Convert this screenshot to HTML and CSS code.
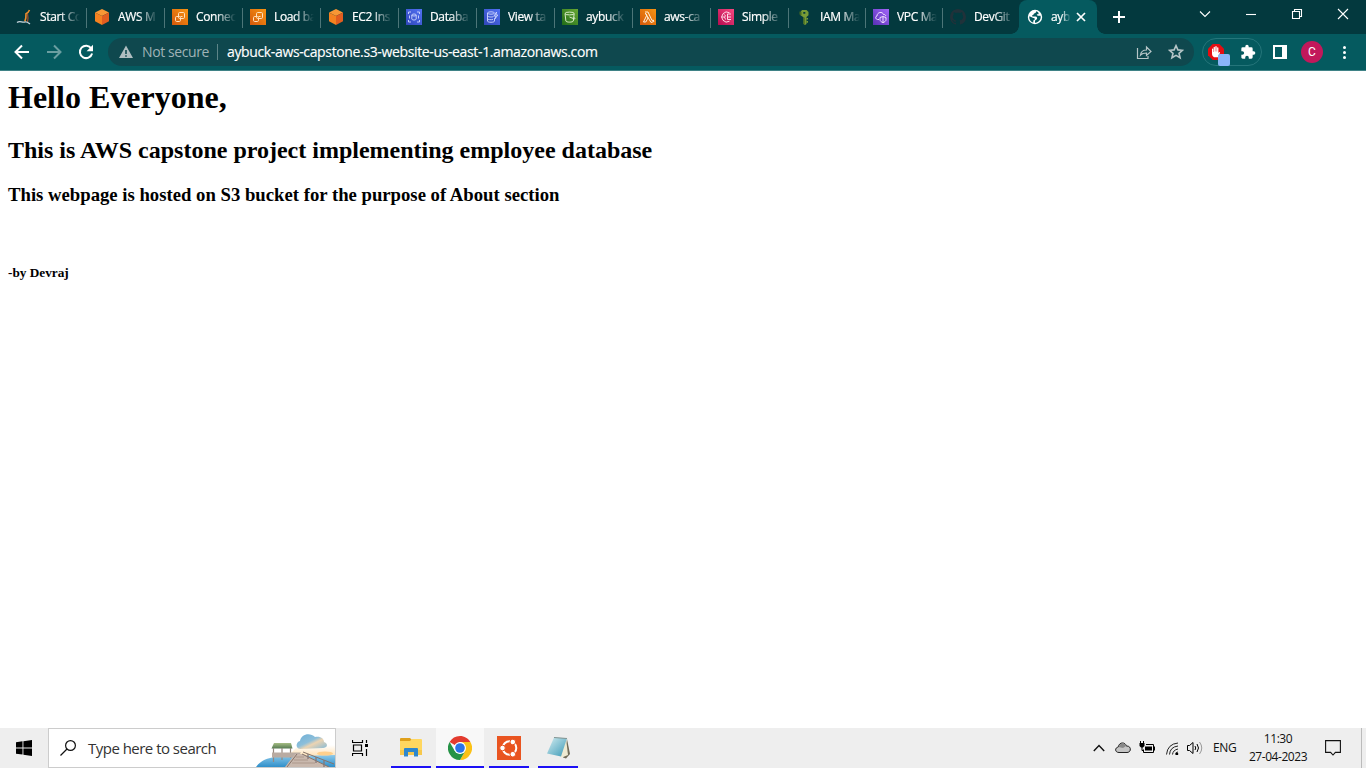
FILE: index.html
```html
<!DOCTYPE html>
<html lang="en">
<head>
<meta charset="utf-8">
<title>aybuck</title>
<link rel="stylesheet" href="styles.css">
</head>
<body>
<svg class="defs" width="0" height="0" aria-hidden="true">
  <defs>
    <linearGradient id="orange" x1="0" y1="1" x2="1" y2="0"><stop offset="0" stop-color="#d4580b"/><stop offset="1" stop-color="#f79412"/></linearGradient>
    <linearGradient id="blue" x1="0" y1="1" x2="1" y2="0"><stop offset="0" stop-color="#3046b8"/><stop offset="1" stop-color="#5272f5"/></linearGradient>
    <linearGradient id="green" x1="0" y1="1" x2="1" y2="0"><stop offset="0" stop-color="#206b18"/><stop offset="1" stop-color="#68a834"/></linearGradient>
    <linearGradient id="pink" x1="0" y1="1" x2="1" y2="0"><stop offset="0" stop-color="#b50b50"/><stop offset="1" stop-color="#f64880"/></linearGradient>
    <linearGradient id="purple" x1="0" y1="1" x2="1" y2="0"><stop offset="0" stop-color="#5730b5"/><stop offset="1" stop-color="#a366fa"/></linearGradient>
    <linearGradient id="water" x1="0" y1="0" x2="0" y2="1"><stop offset="0" stop-color="#8cc9ea"/><stop offset="1" stop-color="#2f8fca"/></linearGradient>
    <linearGradient id="sky" x1="0" y1="0" x2="0" y2="1"><stop offset="0" stop-color="#ffffff"/><stop offset="1" stop-color="#ffe0b0"/></linearGradient>
    <linearGradient id="cloud" x1="0" y1="0" x2="1" y2="1"><stop offset="0" stop-color="#6daed6"/><stop offset=".45" stop-color="#8dbfda"/><stop offset=".6" stop-color="#ecd4b2"/><stop offset="1" stop-color="#80b9d9"/></linearGradient>
    <linearGradient id="roof" x1="0" y1="0" x2="0" y2="1"><stop offset="0" stop-color="#a5bd84"/><stop offset="1" stop-color="#567a52"/></linearGradient>
    <linearGradient id="note" x1="0" y1="0" x2="1" y2="1"><stop offset="0" stop-color="#d5eef1"/><stop offset="1" stop-color="#3998b6"/></linearGradient>
    <symbol id="cube" viewBox="0 0 16 16"><path fill="#f89735" d="M8 0l7 3.500-7 3.600-7-3.600z"/><path fill="#f58220" d="M1 3.500l7 3.600V16l-7-3.800z"/><path fill="#e25d20" d="M15 3.500L8 7.100V16l7-3.800z"/></symbol>
    <symbol id="ec2" viewBox="0 0 16 16"><path fill="url(#orange)" d="M0 0h16v16H0z"/><g fill="none" stroke="#ffe0bc"><rect x="6.500" y="3.500" width="6" height="6" rx="1.200"/><rect x="3.500" y="7.500" width="5" height="5" rx="1.200"/><path d="M8.500 7.500h2"/></g></symbol>
  </defs>
</svg>

<div class="tabstrip">
  <div class="tab first"><svg class="fav" viewBox="0 0 16 16"><path d="M13.500 1c-1 2.500-2 3-3.500 3.800L9.800 9l-1 3.500" fill="none" stroke="#ee8c2c" stroke-width="1.600"/><path d="M11.500 5l.5 4-.5 4" fill="none" stroke="#9b4b2d" stroke-width="1.300"/><path d="M1 13.500c3-2.500 5 .5 8-.5 2-.6 3 .5 5 2" fill="none" stroke="#c8d5de" stroke-width="1.300"/></svg><span class="title">Start Co</span></div>
  <div class="tab"><svg class="fav"><use href="#cube"/></svg><span class="title">AWS M</span></div>
  <div class="tab"><svg class="fav"><use href="#ec2"/></svg><span class="title">Connec</span></div>
  <div class="tab"><svg class="fav"><use href="#ec2"/></svg><span class="title">Load ba</span></div>
  <div class="tab"><svg class="fav"><use href="#cube"/></svg><span class="title">EC2 Ins</span></div>
  <div class="tab"><svg class="fav" viewBox="0 0 16 16"><path fill="url(#blue)" d="M0 0h16v16H0z"/><g fill="none" stroke="#cfd8ff" stroke-width=".9"><path d="M2.500 5V3H5M11 3h2.500v2M2.500 11v2H5M11 13h2.500v-2"/><ellipse cx="8" cy="6" rx="2.200" ry="1"/><path d="M5.800 6v4c0 1.400 4.400 1.400 4.400 0V6M3.500 6.500v3M12.500 6.500v3"/></g></svg><span class="title">Databa</span></div>
  <div class="tab"><svg class="fav" viewBox="0 0 16 16"><path fill="url(#blue)" d="M0 0h16v16H0z"/><g fill="none" stroke="#cfd8ff" stroke-width=".9"><ellipse cx="7" cy="4" rx="3.500" ry="1.200"/><path d="M3.500 4v8c0 1.700 7 1.700 7 0V9.500M3.500 6.700c0 1.500 5 1.600 6 .8M3.500 9.500c0 1.300 4 1.500 5.500.8M12.600 3L10 7h2l-1.200 3 3-4h-2z"/></g></svg><span class="title">View ta</span></div>
  <div class="tab"><svg class="fav" viewBox="0 0 16 16"><path fill="url(#green)" d="M0 0h16v16H0z"/><g fill="none" stroke="#d9ecc8"><ellipse cx="7.600" cy="4.500" rx="4.600" ry="1.400"/><path d="M3 4.500l.9 7.500c.3 1.500 7.100 1.500 7.400 0l.9-7.500M7.500 8l4.500 1.800c1.500.4 1.300-.8-.2-1.500"/></g></svg><span class="title">aybuck</span></div>
  <div class="tab"><svg class="fav" viewBox="0 0 16 16"><path fill="url(#orange)" d="M0 0h16v16H0z"/><path fill="none" stroke="#fff0dd" d="M5 3h3l4 8.500 1.300-.5.5 1.500-2.800 1L7.500 7.500M6.900 6L3.500 13h2.300L8 9 5.800 4.500H5z"/></svg><span class="title">aws-ca</span></div>
  <div class="tab"><svg class="fav" viewBox="0 0 16 16"><path fill="url(#pink)" d="M0 0h16v16H0z"/><g fill="none" stroke="#ffd8e5"><path d="M11.500 3.800a5 5 0 1 0 0 8.400"/><path d="M6.500 5.500l1 1.500-1 1 1 2.500M9.500 5h3.500M9.500 8H13M9.500 10.500H13M9.500 5v5.500M3.500 8h3"/></g></svg><span class="title">Simple</span></div>
  <div class="tab narrow"><svg class="fav" viewBox="0 0 16 16"><path fill="#779b37" fill-rule="evenodd" d="M6 1h4.500l2 2v3.200l-2 1.800V15l-1.500 1L7.500 15V8.300l-3-2V3zM7.300 3v1.700h2V3z"/><path fill="#496c20" d="M3.500 2.500l2 .5v3.300l-2-.8zM7.500 8.500h1.200V15.500L7.500 15z"/><path fill="#779b37" d="M10.500 9H12v1.600h-1.500zM10.500 12H12v1.800h-1.500z"/></svg><span class="title">IAM Ma</span></div>
  <div class="tab narrow"><svg class="fav" viewBox="0 0 16 16"><path fill="url(#purple)" d="M0 0h16v16H0z"/><path fill="none" stroke="#f0dfff" d="M6 10.500H4.500C2.300 10.300 2.200 7.200 4 7c0-4 5.500-4.800 6.500-1.500 1.200-.3 2 .4 2.300 1.500M10 7.500l3 1v2.200c0 1.500-1.400 2.200-3 3-1.600-.8-3-1.500-3-3V8.500zM10 8v5"/></svg><span class="title">VPC Ma</span></div>
  <div class="tab narrow"><svg class="fav" viewBox="0 0 16 16"><path fill="#20323a" d="M8 0C3.600 0 0 3.600 0 8c0 3.500 2.300 6.500 5.500 7.600.4.100.5-.2.500-.4v-1.400c-2.200.5-2.700-1-2.700-1-.4-.9-.9-1.200-.9-1.200-.7-.5.100-.5.100-.5.800.1 1.200.8 1.200.8.700 1.200 1.900.9 2.300.7.100-.5.300-.9.500-1.100-1.800-.2-3.600-.9-3.600-4 0-.9.300-1.600.8-2.100-.1-.2-.4-1 .1-2.200 0 0 .7-.2 2.200.8 1.300-.4 2.700-.4 4 0 1.500-1 2.200-.8 2.200-.8.400 1.100.2 2 .1 2.200.5.500.8 1.300.8 2.100 0 3.100-1.900 3.700-3.700 3.900.3.300.6.800.6 1.500v2.300c0 .2.100.5.500.4A8 8 0 0 0 16 8c0-4.400-3.600-8-8-8z"/></svg><span class="title">DevGit</span></div>
  <div class="tab active"><svg class="fav" viewBox="0 0 16 16"><circle cx="8" cy="8" r="7.200" fill="#fff"/><path fill="#055a5f" d="M9.200 2.300c-.2 1.500-.8 2-2.200 2.200-.3 1.300-1 1.500-1.700 1.500v1.500h3.400c1.300 0 1.400 1 1.400 2 0 1.200-1.900 1.200-2.100 2.500v1.800c3-.1 5.700-2.700 5.700-5.800 0-.6-.1-.8-.2-1.200h-1.900c-1.300 0-1.800-.8-1.800-1.600h1.600c.8-.9-.4-2.500-2.200-2.900zM2.400 7.200c-.6 2.800 1.300 5.600 3.900 6.300v-1.600c0-1 1.500-.5 1.500-1.800 0-.9-.7-1-1.500-1z"/></svg><span class="title short">ayb</span><svg class="tabclose" viewBox="0 0 10 10"><path d="M1 1l8 8M9 1L1 9"/></svg></div>
  <svg class="plus" viewBox="0 0 12 12"><path d="M6 0v12M0 6h12" stroke="#fff" stroke-width="2"/></svg>
  <div class="window-buttons">
    <svg viewBox="0 0 12 12"><path d="M1 3.500l5 5 5-5"/></svg>
    <svg viewBox="0 0 12 12"><path d="M1 6.500h10"/></svg>
    <svg viewBox="0 0 12 12"><path d="M1.500 3.500h7v7h-7zM3.500 3.500v-2h7v7h-2"/></svg>
    <svg viewBox="0 0 12 12"><path d="M1 1l10 10M11 1L1 11"/></svg>
  </div>
</div>

<div class="toolbar">
  <div class="nav">
    <svg viewBox="0 0 16 16"><path d="M15 8H2M8 1.500L1.500 8 8 14.500"/></svg>
    <svg class="dim" viewBox="0 0 16 16"><path d="M1 8h13M8 1.500L14.500 8 8 14.500"/></svg>
    <svg viewBox="0 0 16 16"><path d="M13.300 4.500A6.200 6.200 0 1 0 14.100 9.500"/><path class="solid" d="M15 .8v6.400H8.600z"/></svg>
  </div>
  <div class="omnibox">
    <svg class="warn" viewBox="0 0 14 14"><path fill="#aebdc0" fill-rule="evenodd" d="M7 .5L14 13H0zM6.200 5v4h1.600V5zM6.200 10.200v1.500h1.600v-1.500z"/></svg>
    <span class="insecure">Not secure</span>
    <span class="sep"></span>
    <span class="url">aybuck-aws-capstone.s3-website-us-east-1.amazonaws.com</span>
    <svg class="share" viewBox="0 0 16 16"><path d="M1.500 4v10.500H12V12M4.500 11c.5-3.500 2.500-5 6-5V3l4.500 4.500-4.500 4V9C8 9 6 9.300 4.500 11z"/></svg>
    <svg class="star" viewBox="0 0 16 16"><path d="M8 1.700l1.900 4.200 4.600.4-3.500 3 1.100 4.500L8 11.400l-4.100 2.400L5 9.300l-3.500-3 4.600-.4z"/></svg>
  </div>
  <div class="extensions">
    <div class="blocker"><svg viewBox="0 0 16 16"><path fill="#e40d12" d="M4.700 0h6.600L16 4.700v6.600L11.300 16H4.700L0 11.300V4.700z"/><path fill="#fff" d="M4 5c0-.8 1.200-.8 1.200 0v3h.4V3.500c0-.9 1.300-.9 1.300 0V7.500h.4V2.800c0-1 1.400-1 1.400 0v4.700h.4V3.800c0-.9 1.300-.9 1.300 0V9c.7-1.200 2-1.200 1.600-.2l-2.100 4.400H6C4 12 4 10.500 4 8.500z"/></svg><i></i></div>
    <svg class="puzzle" viewBox="0 0 24 24"><path fill="#fff" d="M20.500 11H19V7a2 2 0 0 0-2-2h-4V3.500a2.500 2.500 0 0 0-5 0V5H4a2 2 0 0 0-2 2v3.800h1.500a2.700 2.700 0 0 1 0 5.400H2V20c0 1.100.9 2 2 2h3.800v-1.500a2.700 2.700 0 0 1 5.400 0V22H17a2 2 0 0 0 2-2v-4h1.500a2.500 2.500 0 0 0 0-5z"/></svg>
  </div>
  <svg class="panel" viewBox="0 0 14 14"><path fill="#fff" fill-rule="evenodd" d="M0 0h14v14H0zM2 2v10h7V2z"/></svg>
  <div class="avatar">C</div>
  <div class="kebab"><i></i><i></i><i></i></div>
</div>

<main class="page">
  <h1>Hello Everyone,</h1>
  <h2>This is AWS capstone project implementing employee database</h2>
  <h3>This webpage is hosted on S3 bucket for the purpose of About section</h3>
  <br>
  <h5>-by Devraj</h5>
</main>

<div class="taskbar">
  <div class="start"><svg viewBox="0 0 16 16"><path d="M0 2.200l6.500-.9v6.200H0zM7.400 1.200L16 0v7.500H7.400zM0 8.400h6.500v6.200L0 13.700zM7.400 8.400H16V16l-8.600-1.200z"/></svg></div>
  <div class="search">
    <svg class="lens" viewBox="0 0 16 16"><circle cx="10.500" cy="5.500" r="4.900"/><path d="M7 9L.5 15.500"/></svg>
    <span class="hint">Type here to search</span>
    <svg class="scene" viewBox="0 0 80 38">
      <path fill="url(#sky)" d="M44 16h36v12H32z"/>
      <path fill="url(#water)" d="M1 38c4-6 12-10 24-10.500L80 26v12z"/>
      <ellipse cx="70" cy="24.500" rx="8" ry="2" fill="#ffd08c"/>
      <path fill="url(#roof)" d="M19 14h17l1.500 5.500H16.500z"/>
      <path stroke="#95877f" stroke-width="1.200" d="M18.500 19v14M27 19v12M35.500 19v10" fill="none"/>
      <path fill="#b9aba2" d="M17 23.500h29l-4 5H17z"/>
      <path fill="#c9b8ad" d="M40 25h8l26 13H30z"/><path d="M41 28h8M39 31h14M37 34h23" stroke="#a08b80" stroke-width=".7" fill="none"/>
      <path d="M48 23l31 12M47 25l27 13M42 25l-10 13" stroke="#857369" fill="none"/><path stroke="#857878" stroke-width="1.300" d="M53 25v5M61 28v6M69 31v7" fill="none"/>
      <path fill="url(#cloud)" d="M45 20c-5-1-4-7 0-8 1-7 10-9 15-4 6-1 9 2 9 5 5 2 3 6-1 6z"/>
    </svg>
  </div>
  <div class="cell view"><svg viewBox="0 0 16 16"><path d="M.5 0v2.500h10V0M.5 16v-2.500h10V16M1.500 5v6h8V5zM14.500 0v3M14.500 9v7" fill="none" stroke="#000" stroke-width="1.200"/><path d="M13 4h3v3h-3z"/></svg></div>
  <div class="cell app folder"><svg viewBox="0 0 22 19"><path fill="#dfa01b" d="M0 1q0-1 1-1h9l2 2v3H0z"/><path fill="#ffd75f" d="M0 3h10l2-2h9q1 0 1 1v15H0z"/><path fill="#f7c84c" d="M0 12h22v5H0z"/><path fill="#2e87cc" d="M4 11q0-1 1-1h12q1 0 1 1v7.500h-4V14H8v4.500H4z"/></svg></div>
  <div class="cell app chrome"><svg viewBox="0 0 24 24"><path fill="#e33b2e" d="M12 0c4.400 0 8.300 2.400 10.400 6H12L6.800 9 1.600 6A12 12 0 0 1 12 0z"/><path fill="#fbc116" d="M22.400 6A12 12 0 0 1 12 24l5.200-9L15.500 7 12 6z"/><path fill="#269347" d="M1.600 6A12 12 0 0 0 12 24l5.200-9-5.200 3-5.200-3z"/><circle cx="12" cy="12" r="6" fill="#fff"/><circle cx="12" cy="12" r="4.800" fill="#2b73e8"/></svg></div>
  <div class="cell app ubuntu"><svg viewBox="0 0 24 24"><path fill="#e95420" d="M0 0h24v24H0z"/><circle cx="12.500" cy="12" r="6.800" fill="none" stroke="#fff" stroke-width="2"/><g fill="#fff" stroke="#e95420"><circle cx="5.500" cy="12" r="2.800"/><circle cx="15.800" cy="6" r="2.800"/><circle cx="15.800" cy="18.200" r="2.800"/></g></svg></div>
  <div class="cell app notepad"><svg viewBox="0 0 24 24"><path fill="#6f6b58" d="M21 3l3 15-4 4.500-3-1z"/><path fill="#eeead2" d="M20 2l2 17-6 2.500-3-2z"/><path fill="url(#note)" d="M8 1.500l13 .8-6 18.200-14-3z"/><path d="M8 1.500l13 1" stroke="#829391" stroke-width="1.200"/></svg></div>
  <div class="tray">
    <svg class="chev" viewBox="0 0 12 12"><path d="M.8 9L6 3.500 11.200 9" fill="none" stroke="#111" stroke-width="1.400"/></svg>
    <svg class="onedrive" viewBox="0 0 16 12"><path fill="#c4c4c4" stroke="#222" d="M4 10.500C-.4 10.500-.3 5.500 3.300 5 4-.3 10.500-.2 11.300 4c5.300-.5 5.300 6.500.7 6.500z"/><path fill="#888" d="M3.500 5c1-4.500 6.800-4.300 7.500-1l-3 2z"/></svg>
    <svg class="battery" viewBox="0 0 16 14"><path fill="none" stroke="#000" d="M7 3.500h7.500v8h-10V8.500M1.500 0v2M4.500 0v2M3 6v3.500h1.500"/><path d="M.5 2h5v3L4 6.500H2L.5 5zM6 5.500h7v4H6zM15 5.500h1v4h-1z"/></svg>
    <svg class="wifi" viewBox="0 0 13 13"><g fill="none" stroke="#222"><path d="M.5 12.500Q1.500 2 12 1M3.500 12.500Q4 5 12 4M6.500 12.500Q7 8 12 7M9.500 12.500q0-2.500 2.500-2.500"/></g><circle cx="11" cy="12" r="1.300"/></svg>
    <svg class="sound" viewBox="0 0 16 14"><path fill="none" stroke="#000" d="M.5 4.500h2L6 1.500v11L2.500 9.500h-2zM8 5q1.500 2 0 4M10 3q3 4 0 8"/><path fill="none" stroke="#999" d="M12.500 1q4.500 6 0 12"/></svg>
    <span class="lang">ENG</span>
    <div class="clock"><span>11:30</span><span>27-04-2023</span></div>
    <svg class="notice" viewBox="0 0 16 16"><path fill="none" stroke="#111" stroke-width="1.100" d="M.6.600h14.800v11.800h-5L8 15l-2.400-2.600h-5z"/></svg>
  </div>
</div>
</body>
</html>
```
FILE: styles.css
```css
* { box-sizing: border-box; }
body { margin: 0; width: 1366px; height: 768px; overflow: hidden; display: flex; flex-direction: column; background: #fff; font-family: "Open Sans", sans-serif; }
svg { display: block; flex: none; }
.defs { height: 0; }

.tabstrip { height: 34px; flex: none; display: flex; background: #03393e; padding-left: 8px; color: #fff; }
.tab { width: 78px; flex: none; height: 34px; display: flex; align-items: center; padding-left: 8px; font-size: 12px; background: linear-gradient(#4c7578, #4c7578) 0 8px / 1px 20px no-repeat; }
.tab.first { background: none; }
.tab.narrow { width: 77px; }
.fav { width: 16px; height: 16px; margin-right: 8px; }
.title { width: 40px; white-space: nowrap; letter-spacing: -.35px; line-height: 20px; padding-bottom: 1px; -webkit-text-stroke: .2px #fff; -webkit-mask-image: linear-gradient(90deg, #000 50%, transparent 100%); mask-image: linear-gradient(90deg, #000 50%, transparent 100%); }
.title.short { width: 20px; }
.tab.active { position: relative; background: #055a5f; border-radius: 8px 8px 0 0; }
.tab.active::before, .tab.active::after { content: ""; position: absolute; bottom: 0; width: 8px; height: 8px; }
.tab.active::before { left: -8px; background: radial-gradient(circle at 0 0, transparent 7.5px, #055a5f 8px); }
.tab.active::after { right: -8px; background: radial-gradient(circle at 100% 0, transparent 7.5px, #055a5f 8px); }
.tabclose { width: 10px; height: 10px; margin-left: 5px; fill: none; stroke: #fff; stroke-width: 1.7; }
.plus { width: 12px; height: 12px; margin: 11px 0 0 16px; }
.window-buttons { margin-left: auto; display: flex; gap: 34px; padding: 8px 17px 0 0; }
.window-buttons svg { width: 12px; height: 12px; fill: none; stroke: #fff; stroke-width: 1.1; }

.toolbar { height: 37px; flex: none; display: flex; align-items: center; background: #055a5f; border-bottom: 1px solid #3f8286; }
.nav { display: flex; gap: 16px; width: 108px; padding-left: 14px; }
.nav svg { width: 16px; height: 16px; fill: none; stroke: #fff; stroke-width: 2; }
.nav .dim { stroke: #6b9ea1; }
.nav .solid { fill: #fff; stroke: none; }
.omnibox { width: 1086px; height: 28px; border-radius: 14px; background: #0f484e; display: flex; align-items: center; padding: 0 10px 0 11px; font-size: 14px; white-space: nowrap; }
.warn { width: 14px; height: 14px; margin-right: 9px; }
.insecure { color: #9fb3b6; width: 68px; letter-spacing: -.4px; line-height: 20px; padding-bottom: 1px; }
.sep { width: 1px; height: 16px; background: #5d8588; margin: 0 9px 0 7px; }
.url { color: #fff; letter-spacing: -.36px; line-height: 20px; padding-bottom: 1px; -webkit-text-stroke: .15px #fff; }
.share, .star { width: 16px; height: 16px; fill: none; stroke: #b6c5c7; stroke-width: 1.2; }
.share { margin-left: auto; margin-right: 16px; }
.star { stroke-width: 1.6; }
.extensions { width: 60px; height: 28px; margin-left: 8px; border: 1px solid #25757a; border-radius: 14px; display: flex; align-items: center; padding-left: 5px; }
.blocker { position: relative; width: 16px; height: 16px; margin-right: 16px; }
.blocker svg { width: 16px; height: 16px; }
.blocker i { position: absolute; left: 10px; top: 10px; width: 12px; height: 12px; border-radius: 2px; background: #8ab4f8; }
.puzzle { width: 16px; height: 16px; }
.panel { width: 14px; height: 14px; margin-left: 11px; }
.avatar { width: 22px; height: 22px; margin-left: 14px; border-radius: 50%; background: #c2185b; color: #fff; font: 12px/22px Roboto, sans-serif; text-align: center; }
.kebab { width: 3px; margin-left: 20px; display: grid; gap: 2px; }
.kebab i { width: 3px; height: 3px; border-radius: 50%; background: #fff; }

.page { flex: 1; padding: 8px; font-family: "Liberation Serif", serif; color: #000; }
.page h1 { margin-top: 0; }

.taskbar { height: 40px; flex: none; display: flex; background: #eee; color: #111; }
.start { width: 48px; display: grid; place-items: center; }
.start svg { width: 16px; height: 16px; }
.search { width: 288px; border: 1px solid #ccc; background: #fff; display: flex; align-items: center; padding-left: 11px; }
.lens { width: 16px; height: 16px; fill: none; stroke: #111; stroke-width: 1.2; }
.hint { margin-left: 12px; font-size: 15px; letter-spacing: -.52px; white-space: nowrap; color: #333; }
.scene { width: 80px; height: 38px; margin-left: auto; }
.cell { height: 40px; display: grid; place-items: center; }
.view { width: 48px; margin-right: 7px; }
.view svg { width: 16px; height: 16px; }
.app { width: 40px; border-bottom: 2px solid #1c10f5; }
.app svg { width: 24px; height: 24px; margin-top: 1px; }
.folder svg { width: 22px; height: 19px; }
.chrome { width: 48px; margin: 0 5px; background: #f8f8f8; }
.notepad { margin-left: 9px; }
.tray { margin-left: auto; margin-right: 4px; padding-right: 20px; border-right: 1px solid #bbb; display: flex; align-items: center; font-size: 12px; }
.chev { width: 12px; height: 12px; margin-right: 10px; }
.onedrive { width: 16px; height: 12px; margin-right: 8px; }
.battery { width: 16px; height: 14px; margin-right: 11px; }
.wifi { width: 13px; height: 13px; margin-right: 8px; }
.sound { width: 16px; height: 14px; margin-right: 10px; }
.lang { width: 24px; letter-spacing: -.4px; line-height: 20px; padding-bottom: 1px; }
.clock { width: 60px; margin: 0 17px 0 11px; display: grid; line-height: 18px; text-align: center; letter-spacing: -.45px; white-space: nowrap; }
.notice { width: 16px; height: 16px; }
```
